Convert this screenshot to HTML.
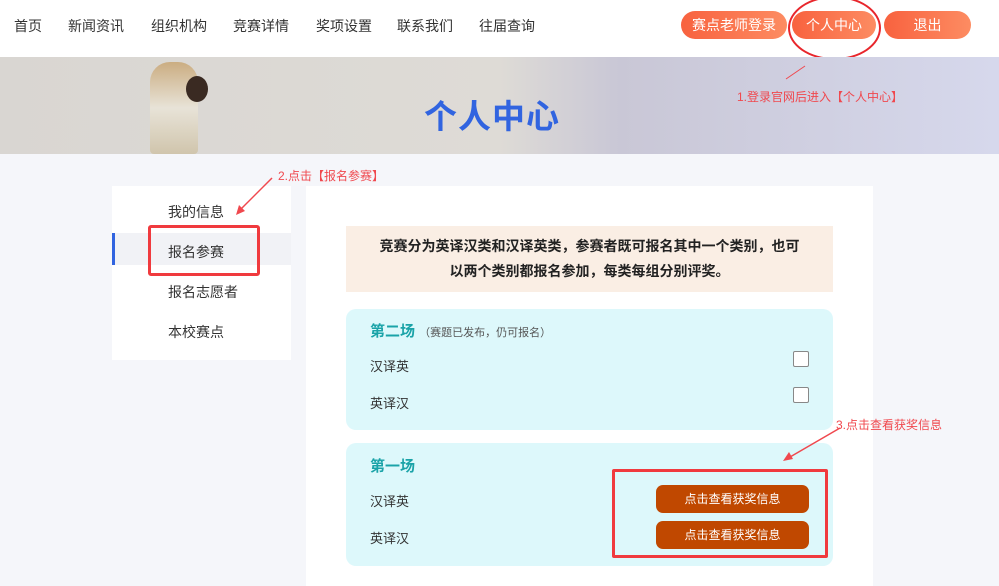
<!DOCTYPE html>
<html><head><meta charset="utf-8"><style>
*{margin:0;padding:0;box-sizing:border-box}
body{width:999px;height:574px;overflow:hidden;background:#f5f6fa;font-family:"Liberation Sans","Noto Sans CJK SC",sans-serif;position:relative;color:#333}
.a{position:absolute}
.nav span{position:absolute;top:16px;font-size:14px;color:#333}
.btn{position:absolute;top:11px;height:28px;border-radius:14px;background:linear-gradient(90deg,#f8623f,#fd8c62);color:#fff;font-size:14px;text-align:center;line-height:28px}
.red{color:#f0484e;font-size:12px}
.side div{position:absolute;left:56px;font-size:14px;color:#333}
.card{position:absolute;left:346px;width:487px;background:#ddf8fb;border-radius:10px}
.rb{position:absolute;left:656px;width:153px;height:28px;border-radius:7px;background:#c04800;color:#fff;font-size:12px;text-align:center;line-height:28px}
.cb{position:absolute;left:793px;width:16px;height:16px;border:1px solid #888;border-radius:2px;background:#fff}
</style></head><body>
<div class="a" style="left:0;top:0;width:999px;height:57px;background:#fff"></div>
<div class="nav">
<span style="left:14px">首页</span><span style="left:68px">新闻资讯</span><span style="left:151px">组织机构</span><span style="left:233px">竞赛详情</span><span style="left:316px">奖项设置</span><span style="left:397px">联系我们</span><span style="left:479px">往届查询</span>
</div>
<div class="btn" style="left:681px;width:106px">赛点老师登录</div>
<div class="btn" style="left:792px;width:84px">个人中心</div>
<div class="btn" style="left:884px;width:87px">退出</div>
<div class="a" style="left:788px;top:-4px;width:93px;height:64px;border:2px solid #e8262c;border-radius:50%"></div>
<div class="a" style="left:0;top:57px;width:999px;height:97px;background:linear-gradient(90deg,#d9d6d2 0%,#dedbd6 50%,#c9c7d6 62%,#d6d8ec 100%)"></div>
<div class="a" style="left:150px;top:62px;width:48px;height:92px;background:linear-gradient(180deg,#c9a878,#e9e4d8 50%,#cfc3a8);border-radius:20px 20px 4px 4px;opacity:.9"></div>
<div class="a" style="left:186px;top:76px;width:22px;height:26px;background:#3a2a22;border-radius:50%"></div>
<div class="a" style="left:424px;top:90px;font-size:33px;font-weight:bold;color:#3164e0;letter-spacing:1px">个人中心</div>
<div class="a side" style="left:112px;top:186px;width:179px;height:174px;background:#fff">
<div style="top:16px">我的信息</div>
<div style="top:47px;left:0;width:179px;height:32px;background:#f1f2f6;border-left:3px solid #3164e0"></div>
<div style="top:56px">报名参赛</div>
<div style="top:96px">报名志愿者</div>
<div style="top:136px">本校赛点</div>
</div>
<div class="a" style="left:148px;top:225px;width:112px;height:51px;border:3px solid #f03a3e;border-radius:3px"></div>
<div class="a" style="left:306px;top:186px;width:567px;height:400px;background:#fff"></div>
<div class="a" style="left:346px;top:226px;width:487px;height:66px;background:#faeee4;font-size:14px;font-weight:bold;text-align:center;line-height:25px;padding-top:8px;color:#222">竞赛分为英译汉类和汉译英类，参赛者既可报名其中一个类别，也可<br>以两个类别都报名参加，每类每组分别评奖。</div>
<div class="card" style="top:309px;height:121px"></div>
<div class="a" style="left:370px;top:320px;font-size:15px;font-weight:bold;color:#1aa3a8">第二场 <span style="font-size:11px;color:#555;font-weight:normal">（赛题已发布，仍可报名）</span></div>
<div class="a" style="left:370px;top:356px;font-size:13px">汉译英</div>
<div class="a" style="left:370px;top:393px;font-size:13px">英译汉</div>
<div class="cb" style="top:351px"></div><div class="cb" style="top:387px"></div>
<div class="card" style="top:443px;height:123px"></div>
<div class="a" style="left:370px;top:455px;font-size:15px;font-weight:bold;color:#1aa3a8">第一场</div>
<div class="a" style="left:370px;top:491px;font-size:13px">汉译英</div>
<div class="a" style="left:370px;top:528px;font-size:13px">英译汉</div>
<div class="rb" style="top:485px">点击查看获奖信息</div>
<div class="rb" style="top:521px">点击查看获奖信息</div>
<div class="a" style="left:612px;top:469px;width:216px;height:89px;border:3px solid #f03a3e;border-radius:2px"></div>
<div class="a red" style="left:737px;top:88px">1.登录官网后进入【个人中心】</div>
<div class="a red" style="left:278px;top:167px">2.点击【报名参赛】</div>
<div class="a red" style="left:836px;top:416px">3.点击查看获奖信息</div>
<svg class="a" style="left:0;top:0" width="999" height="574"><line x1="805" y1="66" x2="786" y2="79" stroke="#f0484e"/>
<line x1="272" y1="178" x2="240" y2="210" stroke="#f0484e" stroke-width="1.5"/><polygon points="236,215 239,205 245,211" fill="#f0484e"/>
<line x1="840" y1="428" x2="790" y2="457" stroke="#f0484e" stroke-width="1.5"/><polygon points="783,461 789,452 793,459" fill="#f0484e"/></svg>
</body></html>
